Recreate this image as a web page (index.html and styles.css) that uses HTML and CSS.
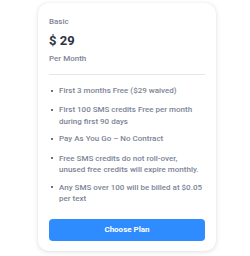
FILE: index.html
```html
<!DOCTYPE html>
<html>
<head>
<meta charset="utf-8">
<link rel="stylesheet" href="styles.css">
</head>
<body>
<div class="page">
  <div class="card">
    <div class="plan">Basic</div>
    <div class="price">$ 29</div>
    <div class="period">Per Month</div>
    <hr class="divider">
    <ul class="features">
      <li>First 3 months Free ($29 waived)</li>
      <li>First 100 SMS credits Free per month during first 90 days</li>
      <li>Pay As You Go – No Contract</li>
      <li>Free SMS credits do not roll-over, unused free credits will expire monthly.</li>
      <li>Any SMS over 100 will be billed at $0.05 per text</li>
    </ul>
    <button class="choose">Choose Plan</button>
  </div>
</div>
</body>
</html>
```
FILE: styles.css
```css
html, body {
  margin: 0;
  padding: 0;
  background: #ffffff;
}
body {
  font-family: Roboto, "Noto Sans", sans-serif;
  width: 250px;
  height: 256px;
  overflow: hidden;
}
.page {
  padding: 3px 0 0 38px;
}
.card {
  box-sizing: border-box;
  width: 178px;
  height: 248px;
  border-radius: 10px;
  background: #fff;
  box-shadow: 0 1px 5px rgba(0,0,0,0.12), 0 0 1px rgba(0,0,0,0.1);
  padding: 13px 11px 0 11px;
  display: flex;
  flex-direction: column;
}
.plan {
  font-size: 8px;
  font-weight: 500;
  color: #7c8596;
  line-height: 12px;
}
.price {
  font-size: 13px;
  font-weight: 700;
  color: #2e3342;
  line-height: 16px;
  margin-top: 5px;
}
.period {
  font-size: 8px;
  font-weight: 500;
  color: #7c8596;
  line-height: 12px;
  margin-top: 4px;
}
.divider {
  border: none;
  border-top: 1px solid #e5e7eb;
  margin: 9px 0 0 0;
  width: 100%;
}
.features {
  list-style: none;
  margin: 10px 0 0 0;
  padding: 0;
  display: flex;
  flex-direction: column;
  gap: 5.8px;
}
.features li {
  position: relative;
  min-height: 13.6px;
  padding-left: 10px;
  font-size: 8px;
  font-weight: 500;
  color: #7c8596;
  line-height: 11.6px;
}
.features li::before {
  content: "";
  position: absolute;
  left: 1.5px;
  top: 4.5px;
  width: 2px;
  height: 2px;
  border-radius: 50%;
  background: #3a4050;
}
.choose {
  margin-top: 13.6px;
  height: 22px;
  width: 100%;
  border: none;
  border-radius: 4px;
  background: #2f8cff;
  color: #fff;
  font-family: inherit;
  font-size: 8px;
  font-weight: 700;
  padding: 0;
}
```
